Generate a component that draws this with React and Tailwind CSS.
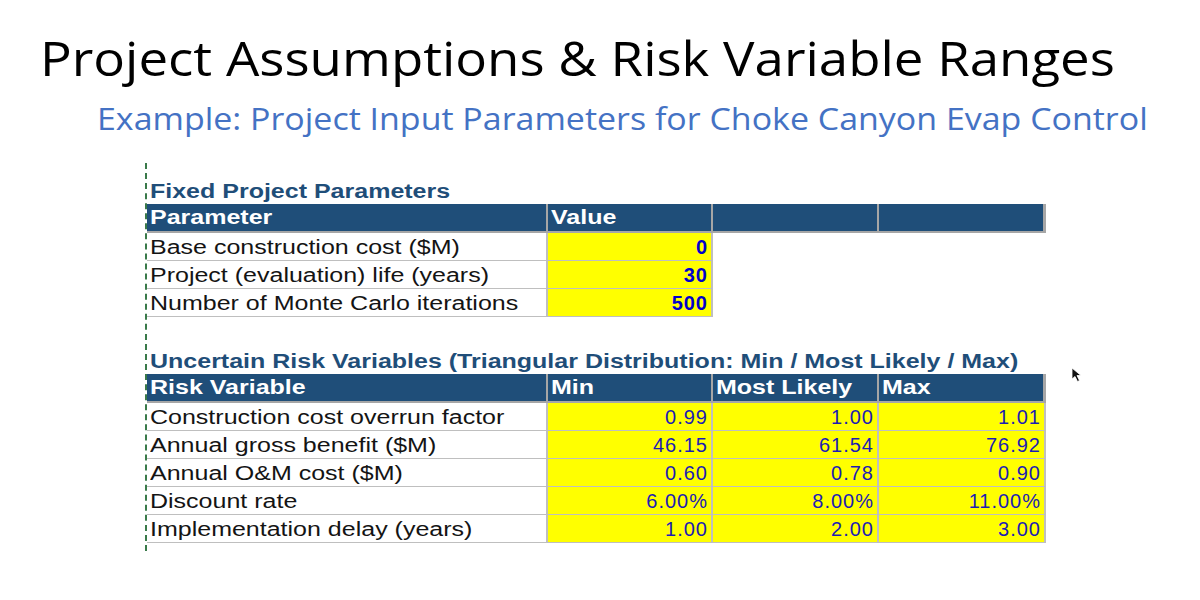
import React from "react";

const fixedRows = [
  ["Base construction cost ($M)", "0"],
  ["Project (evaluation) life (years)", "30"],
  ["Number of Monte Carlo iterations", "500"],
];

const riskRows = [
  ["Construction cost overrun factor", "0.99", "1.00", "1.01"],
  ["Annual gross benefit ($M)", "46.15", "61.54", "76.92"],
  ["Annual O&M cost ($M)", "0.60", "0.78", "0.90"],
  ["Discount rate", "6.00%", "8.00%", "11.00%"],
  ["Implementation delay (years)", "1.00", "2.00", "3.00"],
];

const cols = "grid grid-cols-[401px_165px_166px_167px]";
const head = "bg-[#1f4e79] text-white font-bold text-[20px] leading-[27px] px-[3px] border-r-2 border-b-2 border-[#a6a6a6] h-[29px]";
const label = "text-[20px] leading-[28px] h-[28px] px-[3px] text-[#141414] border-r-2 border-b border-[#bfbfbf] bg-white";
const cell = "bg-[#ffff00] h-[28px] leading-[28px] text-right pr-[3px] text-[20px] border-r-2 border-b border-[#bfbfbf]";

// the sheet is drawn wide, so text is stretched sideways
function Wide({ children }) {
  return <span className="inline-block whitespace-nowrap origin-left scale-x-[1.25]">{children}</span>;
}

function CursorIcon() {
  return (
    <svg width="12" height="16" viewBox="0 0 12 16" className="absolute left-[1071px] top-[367px]">
      <path d="M1 1 L1 12 L4 9.5 L6.5 14.5 L8.5 13.5 L6 8.5 L10 8.5 Z" fill="#111" stroke="#fff" strokeWidth="0.8" />
    </svg>
  );
}

export default function App() {
  return (
    <div className="relative w-[1200px] h-[600px] bg-white overflow-hidden font-['Liberation_Sans',Arial,sans-serif]">
      <h1 className="pl-[40px] pt-[28px] text-[48px] leading-[60px] text-black font-['Open_Sans','Noto_Sans',sans-serif]">
        <span className="inline-block whitespace-nowrap origin-left scale-x-[1.1]">
          Project Assumptions &amp; Risk Variable Ranges
        </span>
      </h1>
      <p className="pl-[97px] mt-[11px] text-[31px] leading-[38px] text-[#4472c4] font-['Open_Sans','Noto_Sans',sans-serif]">
        <span className="inline-block whitespace-nowrap origin-left scale-x-[1.095]">
          Example: Project Input Parameters for Choke Canyon Evap Control
        </span>
      </p>

      <div className="ml-[145px] mt-[26px] w-fit border-l-2 border-dashed border-[#3a7a4a] pt-[15px] pb-[8px]">
        <div className="text-[20px] leading-[26px] font-bold text-[#1f4e79] pl-[3px]">
          <Wide>Fixed Project Parameters</Wide>
        </div>
        <div className={cols}>
          <div className={head}><Wide>Parameter</Wide></div>
          <div className={head}><Wide>Value</Wide></div>
          <div className={head}></div>
          <div className={head + " border-r-[3px]"}></div>
          {fixedRows.map(([name, v]) => (
            <React.Fragment key={name}>
              <div className={label}><Wide>{name}</Wide></div>
              <div className={cell + " font-bold text-[#0000cc] tracking-[1px]"}>{v}</div>
              <div className="h-[28px] col-span-2"></div>
            </React.Fragment>
          ))}
        </div>

        <div className="mt-[31px] text-[20px] leading-[26px] font-bold text-[#1f4e79] pl-[3px]">
          <Wide>Uncertain Risk Variables (Triangular Distribution: Min / Most Likely / Max)</Wide>
        </div>
        <div className={cols}>
          <div className={head}><Wide>Risk Variable</Wide></div>
          <div className={head}><Wide>Min</Wide></div>
          <div className={head}><Wide>Most Likely</Wide></div>
          <div className={head + " border-r-[3px]"}><Wide>Max</Wide></div>
          {riskRows.map(([name, a, b, c]) => (
            <React.Fragment key={name}>
              <div className={label}><Wide>{name}</Wide></div>
              <div className={cell + " text-[#1c1cb4] tracking-[1px]"}>{a}</div>
              <div className={cell + " text-[#1c1cb4] tracking-[1px]"}>{b}</div>
              <div className={cell + " text-[#1c1cb4] tracking-[1px]"}>{c}</div>
            </React.Fragment>
          ))}
        </div>
      </div>

      <CursorIcon />
    </div>
  );
}
